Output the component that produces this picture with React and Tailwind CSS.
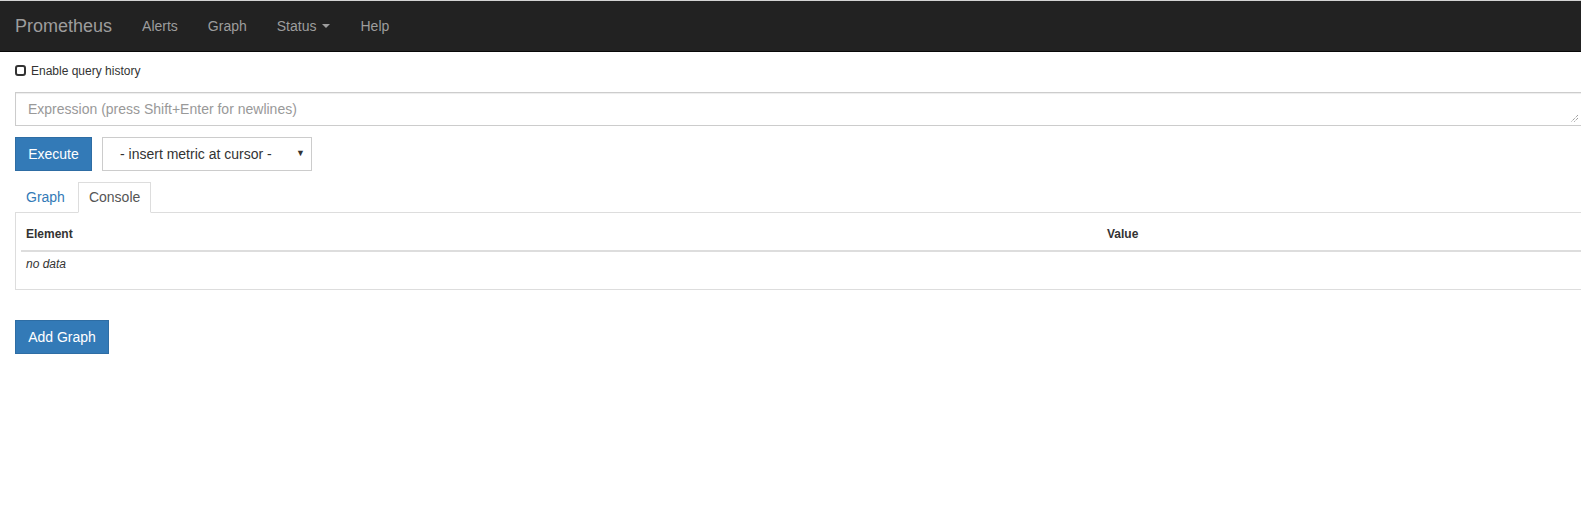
export default function App() {
  const font = { fontFamily: '"Liberation Sans", Arial, sans-serif' };
  return (
    <div className="w-full min-h-[512px] overflow-hidden bg-white text-[14px] text-[#333]" style={font}>
      <div className="w-[1630px]">
        {/* Navbar */}
        <nav className="h-[52px] bg-[#222] border-t border-t-[#d4d4d4] border-b border-b-[#080808] flex items-center px-[15px]">
          <span className="text-[18px] text-[#9d9d9d] pr-[15px] leading-[20px]">Prometheus</span>
          <ul className="flex items-center">
            <li className="px-[15px] text-[#9d9d9d] leading-[20px]">Alerts</li>
            <li className="px-[15px] text-[#9d9d9d] leading-[20px]">Graph</li>
            <li className="px-[15px] text-[#9d9d9d] leading-[20px] flex items-center">
              Status
              <span className="ml-[6px] w-0 h-0 border-l-[4px] border-r-[4px] border-t-[4px] border-l-transparent border-r-transparent border-t-[#9d9d9d]" />
            </li>
            <li className="px-[15px] text-[#9d9d9d] leading-[20px]">Help</li>
          </ul>
        </nav>

        <div className="px-[15px]">
          {/* Query history */}
          <div className="flex items-start gap-[5px] pt-[12px] h-[40px]">
            <span className="mt-[1px] w-[11px] h-[11px] border-2 border-[#333] rounded-[3px]" />
            <span className="text-[12px] leading-[14px]">Enable query history</span>
          </div>

          {/* Expression */}
          <div className="relative w-[1568px] h-[34px] border border-[#ccc] shadow-[inset_0_1px_1px_rgba(0,0,0,0.075)] flex items-center px-[12px]">
            <span className="text-[#999] text-[14px]">Expression (press Shift+Enter for newlines)</span>
            <svg className="absolute right-[3px] bottom-[2px]" width="9" height="9" viewBox="0 0 9 9">
              <path d="M8 1 L1 8 M8 4 L4 8" stroke="#777" strokeWidth="1" strokeDasharray="1 1" />
            </svg>
          </div>

          {/* Execute + select */}
          <div className="flex items-center gap-[10px] mt-[11px]">
            <button className="h-[34px] w-[77px] bg-[#337ab7] border border-[#2e6da4] text-white text-[14px]">
              Execute
            </button>
            <div className="h-[34px] w-[210px] border border-[#ccc] flex items-center justify-between pl-[17px] pr-[6px]">
              <span className="text-[#333]">- insert metric at cursor -</span>
              <span className="text-[9px] text-[#333]">▼</span>
            </div>
          </div>

          {/* Tabs */}
          <div className="mt-[11px] flex border-b border-[#ddd] h-[31px]">
            <span className="px-[10px] mr-[2px] flex items-center text-[#337ab7] border border-transparent">Graph</span>
            <span className="px-[10px] flex items-center text-[#555] bg-white border border-[#ddd] border-b-white h-[31px]">
              Console
            </span>
          </div>

          {/* Panel */}
          <div className="border border-t-0 border-[#ddd] px-[5px] pt-[5px] h-[77px]">
            <table className="w-full border-collapse">
              <thead>
                <tr className="border-b-2 border-[#ddd]">
                  <th className="text-left font-bold text-[12px] px-[5px] h-[33px] w-[1081px]">Element</th>
                  <th className="text-left font-bold text-[12px] px-[5px] h-[33px]">Value</th>
                </tr>
              </thead>
              <tbody>
                <tr>
                  <td className="italic text-[12px] px-[5px] h-[24px]">no data</td>
                  <td />
                </tr>
              </tbody>
            </table>
          </div>

          {/* Add Graph */}
          <button className="mt-[30px] h-[34px] w-[94px] bg-[#337ab7] border border-[#2e6da4] text-white text-[14px]">
            Add Graph
          </button>
        </div>
      </div>
    </div>
  );
}
